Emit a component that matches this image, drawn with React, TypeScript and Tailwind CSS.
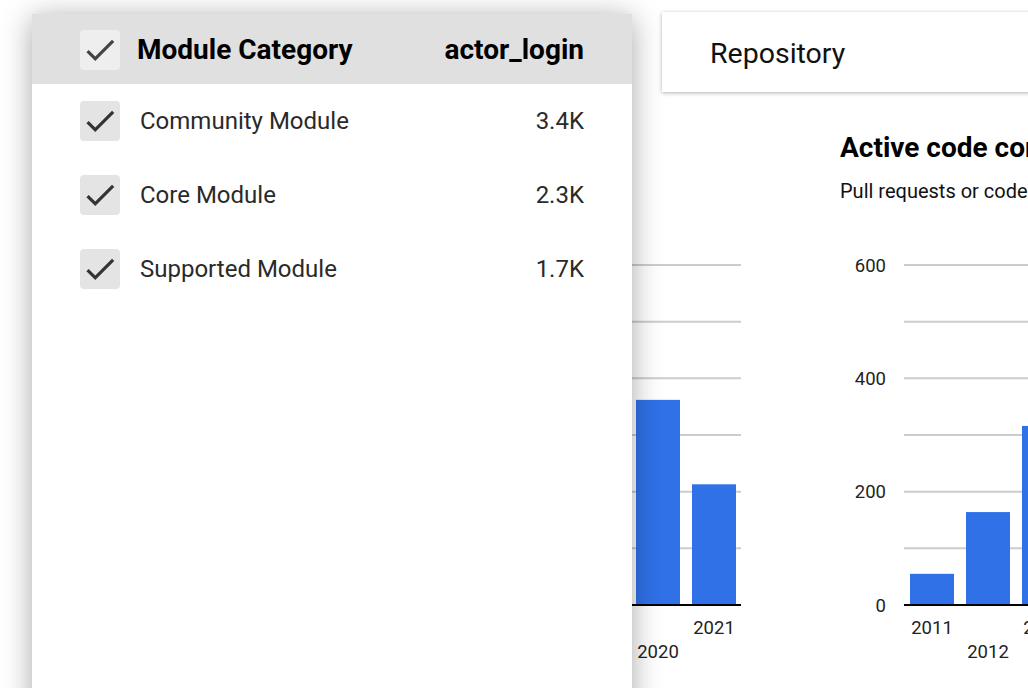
const CHECK = "M9 16.17L4.83 12l-1.42 1.41L9 19 21 7l-1.41-1.41z";

function Check({ light }: { light?: boolean }) {
  return (
    <div
      className={
        "flex h-10 w-10 shrink-0 items-center justify-center rounded-[4px] " +
        (light ? "bg-[#eeeeee]" : "bg-[#e4e4e4]")
      }
    >
      <svg width="38" height="38" viewBox="0 0 24 24">
        <path d={CHECK} fill={light ? "#444" : "#333"} />
      </svg>
    </div>
  );
}

const GRID = [15, 71.7, 128.3, 185, 241.7, 298.3];
const BASE = 355;
const PX = 340 / 600;

type Bar = { x: number; v: number; label: string; row: number };

function Plot({
  width,
  gridFrom,
  bars,
  yLabels,
}: {
  width: number;
  gridFrom: number;
  bars: Bar[];
  yLabels: boolean;
}) {
  return (
    <svg width={width} height={420} className="block shrink-0" style={{ fontFamily: "Roboto, sans-serif" }}>
      {GRID.map((y) => (
        <line key={y} x1={gridFrom} x2={width} y1={y} y2={y} stroke="#cccccc" strokeWidth={2} />
      ))}
      {yLabels &&
        [
          ["600", 15],
          ["400", 128.3],
          ["200", 241.7],
          ["0", 355],
        ].map(([t, y]) => (
          <text key={t as string} x={46} y={(y as number) + 6.5} textAnchor="end" fontSize={18.5} fill="#222">
            {t}
          </text>
        ))}
      {bars.map((b) => (
        <g key={b.label}>
          <rect x={b.x} y={BASE - b.v * PX} width={44} height={b.v * PX} fill="#3071e8" />
          <text
            x={b.x + 22}
            y={b.row === 0 ? 384 : 408}
            textAnchor="middle"
            fontSize={18.5}
            fill="#222"
          >
            {b.label}
          </text>
        </g>
      ))}
      <line x1={gridFrom} x2={width} y1={BASE} y2={BASE} stroke="#000" strokeWidth={2} />
    </svg>
  );
}

export default function App() {
  return (
    <div className="relative h-[688px] w-[1028px] overflow-hidden bg-white font-['Roboto',sans-serif] text-[#222]">
      <div className="flex flex-col">
        <div className="flex pl-[662px] pt-3">
          <div className="flex h-20 w-[420px] shrink-0 items-center bg-white pl-12 pt-1 text-[28.5px] text-[#111] shadow-[0_1px_4px_rgba(0,0,0,0.3)]">
            Repository
          </div>
        </div>
        <div className="flex pt-[38px]">
          <div className="flex w-[741px] shrink-0 flex-col pl-[400px]">
            <div className="h-[120px]" />
            <Plot
              width={341}
              gridFrom={60}
              yLabels={false}
              bars={[
                { x: 68, v: 120, label: "2017", row: 0 },
                { x: 124, v: 220, label: "2018", row: 1 },
                { x: 180, v: 300, label: "2019", row: 0 },
                { x: 236, v: 362, label: "2020", row: 1 },
                { x: 292, v: 213, label: "2021", row: 0 },
              ]}
            />
          </div>
          <div className="ml-[99px] flex w-[300px] shrink-0 flex-col">
            <div className="whitespace-nowrap text-[28px] font-bold leading-9 text-black">
              Active code contributors
            </div>
            <div className="mt-[13px] whitespace-nowrap text-[20px] leading-6 text-[#111]">
              Pull requests or code commits
            </div>
            <div className="h-[47px]" />
            <Plot
              width={300}
              gridFrom={64}
              yLabels={true}
              bars={[
                { x: 70, v: 55, label: "2011", row: 0 },
                { x: 126, v: 164, label: "2012", row: 1 },
                { x: 182, v: 316, label: "2013", row: 0 },
              ]}
            />
          </div>
        </div>
      </div>

      <div className="absolute left-8 top-[14px] h-[700px] w-[600px] bg-white shadow-[0_4px_28px_rgba(0,0,0,0.35)]">
        <div className="flex h-[70px] items-center bg-[#e0e0e0] pl-12 pr-12 pt-[2px]">
          <Check light />
          <div className="ml-[17px] flex-1 text-[28px] font-bold text-black">Module Category</div>
          <div className="text-[28px] font-bold text-black">actor_login</div>
        </div>
        {[
          ["Community Module", "3.4K"],
          ["Core Module", "2.3K"],
          ["Supported Module", "1.7K"],
        ].map(([n, v]) => (
          <div key={n} className="flex h-[74px] items-center pl-12 pr-12">
            <Check />
            <div className="ml-5 flex-1 text-[24px] text-[#2a2a2a]">{n}</div>
            <div className="text-[24px] text-[#2a2a2a]">{v}</div>
          </div>
        ))}
      </div>
    </div>
  );
}
